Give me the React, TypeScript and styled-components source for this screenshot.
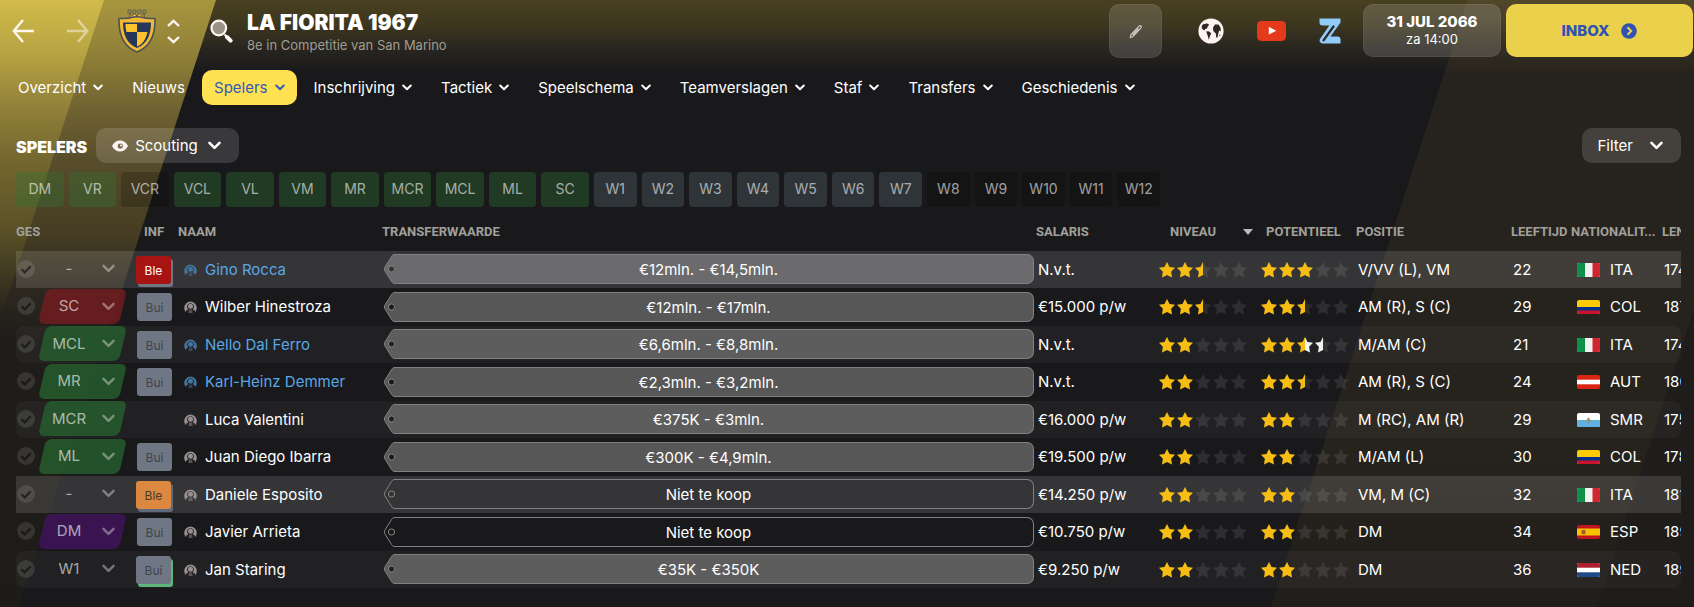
import React from "react";
import styled, { createGlobalStyle, css } from "styled-components";

const GlobalStyle = createGlobalStyle`
  *, *::before, *::after { box-sizing: border-box; }
  body {
    margin: 0;
    background: #19191b;
    color: #fff;
    font-family: Inter, "Liberation Sans", sans-serif;
    font-size: 15px;
    line-height: 20px;
  }
  button, select { font: inherit; color: inherit; }
  a { color: inherit; text-decoration: none; }
`;

const Page = styled.div`
  position: relative;
  min-height: 100vh;
  overflow: hidden;
  isolation: isolate;
  background: linear-gradient(#484020 0, #3d371f 24px, #2a2720 46px, #19191b 72px);
`;

const Beam = styled.div`
  position: absolute;
  inset: 0;
  z-index: -1;
`;

const WideBeam = styled(Beam)`
  clip-path: polygon(0 0, 216px 0, 0 665px);
  background: linear-gradient(
    #a8963e 0, #928238 50px, #6f6231 110px, #584d2b 160px,
    #453c23 235px, #2c2820 290px, #1f1d1a 340px, #1e1c19 600px
  );
`;

const BrightBeam = styled(Beam)`
  clip-path: polygon(0 0, 104px 0, 0 320px);
  background: linear-gradient(
    #d2bb4a 0, #b9a543 50px, #8f7f39 110px, #74672f 160px,
    #584f26 235px, #39331f 285px, #211f1a 320px
  );
`;

const RightBeam = styled(Beam)`
  clip-path: polygon(
    calc(100% - 226px) 0, 100% 0, 100% 310px,
    calc(100% - 225px) 1000px, calc(100% - 551px) 1000px
  );
  background: linear-gradient(#51472a 0, #463e27 24px, #352f22 46px, #26221d 76px, #26231d 450px, #211e1b 607px);
`;

const RightEdge = styled(Beam)`
  clip-path: polygon(100% 310px, 100% 100%, calc(100% - 97px) 607px, calc(100% - 97px) 100%);
  background: #1e1d1b;
`;

/* ---------- top bar ---------- */

const TopBar = styled.header`
  display: flex;
  align-items: flex-start;
  justify-content: space-between;
  height: 62px;
  padding: 4px 1px 0 12px;
`;

const TopGroup = styled.div`
  display: flex;
  align-items: center;
  height: 54px;
`;

const IconButton = styled.button<{ $faded?: boolean }>`
  display: grid;
  place-items: center;
  padding: 0;
  border: 0;
  background: none;
  cursor: pointer;
  opacity: ${(p) => (p.$faded ? 0.5 : 1)};
  svg { display: block; }
`;

const History = styled.div`
  display: flex;
  gap: 33px;
  margin-right: 29px;
`;

const Stepper = styled.div`
  display: grid;
  gap: 9px;
  margin: 0 30px 0 11px;
`;

const ClubTitle = styled.div`
  margin-left: 14px;
  padding-top: 4px;
`;

const ClubName = styled.h1`
  margin: 0;
  font-size: 21px;
  line-height: 24px;
  font-weight: 900;
`;

const ClubStanding = styled.p`
  margin: 0;
  font-size: 13px;
  line-height: 20px;
  color: #a09c92;
`;

const EditButton = styled(IconButton)`
  width: 53px;
  height: 54px;
  margin-right: 36px;
  border-radius: 10px;
  border: 1px solid rgba(255, 255, 255, 0.06);
  background: rgba(255, 255, 255, 0.14);
`;

const Shortcuts = styled.div`
  display: flex;
  align-items: center;
  gap: 33px;
  margin-right: 22px;
`;

const DateButton = styled.button`
  display: flex;
  flex-direction: column;
  align-items: center;
  justify-content: center;
  align-self: flex-start;
  width: 138px;
  height: 53px;
  padding: 0;
  border: 1px solid rgba(255, 255, 255, 0.05);
  border-radius: 10px;
  background: rgba(255, 255, 255, 0.15);
  cursor: pointer;
`;

const DateDay = styled.span`
  font-size: 15px;
  line-height: 17px;
  font-weight: 800;
`;

const DateTime = styled.span`
  font-size: 13px;
  line-height: 18px;
`;

const InboxButton = styled.button`
  display: flex;
  align-items: center;
  justify-content: center;
  align-self: flex-start;
  gap: 12px;
  width: 187px;
  height: 53px;
  margin-left: 5px;
  padding: 0;
  border: 0;
  border-radius: 10px;
  background: #ebd04c;
  color: #3052b4;
  font-weight: 800;
  cursor: pointer;
`;

/* ---------- navigation ---------- */

const Nav = styled.nav`
  display: flex;
  gap: 5px;
  margin-top: 8px;
  padding-left: 6px;
`;

const NavLink = styled.a<{ $active?: boolean }>`
  display: flex;
  align-items: center;
  gap: 7px;
  height: 35px;
  padding: 0 12px;
  border-radius: 10px;
  white-space: nowrap;
  ${(p) =>
    p.$active &&
    css`
      background: #ffe152;
      color: #3459b8;
    `}
`;

/* ---------- squad toolbar ---------- */

const Main = styled.main`
  padding: 0 13px 19px 16px;
`;

const Toolbar = styled.div`
  display: flex;
  align-items: center;
  justify-content: space-between;
  margin-top: 23px;
`;

const ToolbarStart = styled.div`
  display: flex;
  align-items: center;
  gap: 9px;
`;

const SectionTitle = styled.h2`
  margin: 0;
  padding-top: 3px;
  font-size: 16px;
  line-height: 20px;
  font-weight: 900;
`;

const ToolButton = styled.button`
  display: flex;
  align-items: center;
  gap: 7px;
  height: 35px;
  padding: 0 18px 0 16px;
  border: 0;
  border-radius: 10px;
  background: rgba(255, 245, 250, 0.14);
  cursor: pointer;
`;

const ToolLabel = styled.span<{ $gap: number }>`
  margin-right: ${(p) => p.$gap}px;
`;

const Chips = styled.div`
  display: grid;
  grid-template-columns: repeat(11, minmax(0, 48fr)) repeat(12, minmax(0, 43fr));
  gap: 5px;
  max-width: 1144px;
  margin-top: 9px;
`;

type ChipTone = "green" | "slate" | "empty";

const chipColors: Record<ChipTone, string> = {
  green: "rgba(50, 118, 52, 0.37)",
  slate: "rgba(78, 92, 100, 0.4)",
  empty: "rgba(0, 0, 0, 0.2)",
};

const Chip = styled.button<{ $tone: ChipTone }>`
  height: 35px;
  padding: 0 0 2px;
  border: 0;
  border-radius: 4px;
  background: ${(p) => chipColors[p.$tone]};
  color: rgba(255, 255, 255, 0.6);
  font-size: 14px;
  cursor: pointer;
`;

/* ---------- player table ---------- */

const Table = styled.table`
  width: 100%;
  table-layout: fixed;
  border-collapse: separate;
  border-spacing: 0;
`;

const Col = styled.col<{ $w?: number }>`
  width: ${(p) => (p.$w ? `${p.$w}px` : "auto")};
`;

const Th = styled.th<{ $pad?: number }>`
  height: 44px;
  padding: 6px 0 0 ${(p) => p.$pad ?? 0}px;
  overflow: hidden;
  text-align: left;
  white-space: nowrap;
  font-family: Roboto, "Liberation Sans", sans-serif;
  font-size: 13px;
  font-weight: 700;
  color: #a1a09b;
`;

const SortHead = styled.span`
  display: flex;
  align-items: center;
  justify-content: space-between;
  padding-right: 8px;
`;

const Td = styled.td<{ $pad?: number }>`
  padding: 0 0 0 ${(p) => p.$pad ?? 0}px;
  overflow: hidden;
  white-space: nowrap;
`;

const Row = styled.tr<{ $tone: "high" | "stripe" | "plain" }>`
  height: ${(p) => (p.$tone === "plain" ? 38 : 37)}px;
  td {
    background: ${(p) =>
      p.$tone === "high"
        ? "rgba(255, 255, 255, 0.125)"
        : p.$tone === "stripe"
          ? "rgba(255, 255, 255, 0.035)"
          : "transparent"};
  }
  ${(p) =>
    p.$tone === "stripe" &&
    css`
      td:first-child { border-radius: 8px 0 0 8px; }
      td:last-child { border-radius: 0 8px 8px 0; }
    `}
`;

const Selection = styled.div`
  display: flex;
  align-items: center;
  gap: 3px;
  height: 35px;
  margin-bottom: 2px;
  padding-left: 1px;
`;

const CheckLabel = styled.label`
  position: relative;
  display: block;
  width: 18px;
  height: 18px;
  svg { display: block; }
`;

const CheckInput = styled.input`
  position: absolute;
  inset: 0;
  width: 18px;
  height: 18px;
  margin: 0;
  opacity: 0;
`;

const Pill = styled.div<{ $color: string }>`
  position: relative;
  width: 89px;
  height: 35px;
  color: rgba(255, 255, 255, 0.38);
  &::before {
    content: "";
    position: absolute;
    inset: 0 4px;
    border-radius: 6px;
    background: ${(p) => p.$color};
    transform: skewX(-13deg);
  }
  svg {
    position: absolute;
    right: 12px;
    top: 13px;
    pointer-events: none;
  }
`;

const PillSelect = styled.select`
  position: relative;
  appearance: none;
  width: 89px;
  height: 35px;
  padding: 0 27px 0 0;
  border: 0;
  background: none;
  color: rgba(255, 255, 255, 0.62);
  text-align: center;
  text-align-last: center;
  option { color: #000; }
`;

const Badge = styled.span<{ $bg: string; $fg: string; $under?: string }>`
  display: block;
  width: 35px;
  height: 28px;
  margin-left: ${(p) => (p.$under ? 2 : 3)}px;
  border-radius: 3px;
  background: ${(p) => p.$bg};
  color: ${(p) => p.$fg};
  box-shadow: ${(p) => (p.$under ? `2px 3px 0 ${p.$under}` : "none")};
  font-size: 12px;
  line-height: 29px;
  text-align: center;
`;

const Player = styled.a<{ $scouted?: boolean }>`
  display: flex;
  align-items: center;
  gap: 8px;
  padding-left: 6px;
  color: ${(p) => (p.$scouted ? "#5aa7e6" : "#fff")};
  svg { color: ${(p) => (p.$scouted ? "#44749e" : "#989090")}; }
`;

const Tag = styled.div`
  display: flex;
  height: 30px;
  margin: 0 2px 1px;
  svg { flex: none; display: block; }
`;

const TagBody = styled.div<{ $filled: boolean }>`
  flex: 1;
  padding-right: 11px;
  border: 1px solid #818181;
  border-left: 0;
  border-radius: 0 7px 7px 0;
  background: ${(p) => (p.$filled ? "rgba(255, 255, 255, 0.27)" : "transparent")};
  line-height: 29px;
  text-align: center;
`;

const Stars = styled.span`
  display: flex;
  gap: 2px;
`;

const Nation = styled.span`
  display: flex;
  align-items: center;
  gap: 10px;
`;

/* ---------- drawings ---------- */

const Chevron = ({ w = 10, sw = 2 }: { w?: number; sw?: number }) => (
  <svg width={w} height={w === 10 ? 7 : 9} viewBox={w === 10 ? "0 0 10 7" : "0 0 13 9"} fill="none" stroke="currentColor" strokeWidth={sw} strokeLinecap="round" strokeLinejoin="round" aria-hidden="true">
    <path d={w === 10 ? "M1.2 1.5 5 5.2 8.8 1.5" : "M1.5 1.8 6.5 6.8 11.5 1.8"} />
  </svg>
);

const Arrow = ({ back }: { back?: boolean }) => (
  <svg width="22" height="24" viewBox="0 0 22 24" fill="none" stroke="#fff8f0" strokeWidth="2.4" aria-hidden="true">
    <path d={back ? "M11 1 1.8 12 11 23M2 12h20" : "M11 1 20.2 12 11 23M20 12H0"} />
  </svg>
);

const Step = ({ up }: { up?: boolean }) => (
  <svg width="13" height="8" viewBox="0 0 13 8" fill="none" stroke="#fff8f4" strokeWidth="2.4" aria-hidden="true">
    <path d={up ? "M1 7 6.5 1.8 12 7" : "M1 1 6.5 6.2 12 1"} />
  </svg>
);

const Crest = () => (
  <svg width="38" height="44" viewBox="0 0 38 44" role="img" aria-label="La Fiorita">
    <g fill="none" stroke="#6c6a4a" strokeWidth="1.3">
      <circle cx="11.5" cy="2.6" r="1.7" />
      <circle cx="16.5" cy="2.6" r="1.7" />
      <circle cx="21.5" cy="2.6" r="1.7" />
      <circle cx="26.5" cy="2.6" r="1.7" />
    </g>
    <path d="M12 10V4.6l2.4 2.2 2.3-2.2L19 6.8l2.3-2.2 2.3 2.2L26 4.6V10z" fill="#f3bd36" stroke="#4d5157" strokeWidth="1" />
    <path d="M1 9.5C7 9.5 10 10 13 8.500 17 7.500 21 7.500 25 8.500 28 10 31 9.500 37 9.500 37.500 26 32 38 19 43 6 38 .5 26 1 9.500z" fill="#f0b935" stroke="#4d5157" strokeWidth="1.6" />
    <path d="M5 13.500H33C33 26 29 35 19 39 9 35 5 26 5 13.500z" fill="#27375a" />
    <path d="M7.500 15H19V23H8.500C7.800 20 7.500 18 7.500 15zM19 23H29.500C28 30 25 35 19 37.500z" fill="#fcc22e" />
  </svg>
);

const SearchIcon = () => (
  <svg width="23" height="24" viewBox="0 0 23 24" aria-hidden="true">
    <path d="m14.500 15.500 2 2" stroke="#fff6f2" strokeWidth="2" />
    <path d="m17 18 3.600 3.600" stroke="#fff6f2" strokeWidth="4" strokeLinecap="round" />
    <circle cx="8.800" cy="9" r="7.300" fill="#9c9187" stroke="#fff6f2" strokeWidth="2.200" />
  </svg>
);

const PencilIcon = () => (
  <svg width="14" height="15" viewBox="0 0 14 15" fill="none" stroke="#d8d2cc" strokeWidth="1.1" strokeLinejoin="round" aria-hidden="true">
    <path d="M1.300 13.600 1.900 10.600 10.300 1.900C11.400 1 13 2.500 12.200 3.700L3.900 12.700zM3.600 11 9.500 4.700" />
  </svg>
);

const GlobeIcon = () => (
  <svg width="26" height="26" viewBox="0 0 26 26" aria-hidden="true">
    <circle cx="13" cy="13" r="12.600" fill="#fff3f1" />
    <g fill="#2c2820">
      <path d="M3.500 8.500 5.500 5.800 7 6.300 8.500 5.300 11.300 6.800 9.800 8.300 9 10.500 7.300 11 6.300 12.600 4.300 11z" />
      <path d="M8.200 13.500 10.500 13.300 13.200 15.300 12 18 10.800 21.800 9.800 18z" />
      <path d="M15 9.500 17 6.500 20.500 6.500 22.500 9.500 22.800 13.500 21.200 12.600 20.300 15.500 19.500 19.500 18.300 19.800 17.800 15.500 15.300 13z" />
      <path d="m20.800 18.300 1.300-2 .3 1.500z" />
    </g>
  </svg>
);

const VideoIcon = () => (
  <svg width="29" height="20" viewBox="0 0 29 20" aria-hidden="true">
    <rect width="29" height="20" rx="4.500" fill="#e23a1b" />
    <path d="M11.800 5.800v7.800l7.500-3.900z" fill="#fff" />
  </svg>
);

const ZIcon = () => (
  <svg width="22" height="26" viewBox="0 0 22 26" aria-hidden="true">
    <path d="M.5.500H21.500V4.500L11.500 18.500H18.500A3 3 0 0 1 21.500 21.500V25.500H4C1 25.500-.3 22.800 1.300 20.500L10.300 7.500H3.500A3 3 0 0 1 .5 4.500z" fill="#90cbf9" />
    <path d="M14.500 8.500 4.500 22.300" stroke="#2c2820" strokeWidth="2.200" strokeLinecap="round" />
  </svg>
);

const InboxArrow = () => (
  <svg width="16" height="16" viewBox="0 0 16 16" aria-hidden="true">
    <circle cx="8" cy="8" r="7.800" fill="#3052b4" />
    <path d="m6.500 4.300 3.700 3.700-3.700 3.700" fill="none" stroke="#ebd04c" strokeWidth="2" />
  </svg>
);

const EyeIcon = () => (
  <svg width="16" height="12" viewBox="0 0 16 12" aria-hidden="true">
    <path fillRule="evenodd" fill="#fff4f2" d="M0 6C2 2.200 4.800.5 8 .5S14 2.200 16 6C14 9.800 11.200 11.500 8 11.500S2 9.800 0 6zM8.300 3.400A2.600 2.600 0 1 0 8.300 8.600 2.600 2.600 0 1 0 8.300 3.400z" />
    <circle cx="9" cy="5.400" r="1" fill="#fff4f2" />
  </svg>
);

const CheckMark = () => (
  <svg width="18" height="18" viewBox="0 0 18 18" aria-hidden="true">
    <circle cx="9" cy="9" r="9" fill="rgba(255,255,255,.11)" />
    <path d="m4.500 9.300 3.200 3.200 6-6.300" fill="none" stroke="rgba(0,0,0,.55)" strokeWidth="2.200" />
  </svg>
);

const PersonIcon = () => (
  <svg width="13" height="12" viewBox="0 0 13 12" aria-hidden="true">
    <path fill="currentColor" fillRule="evenodd" d="M1.900 11.200A6.300 6.300 0 1 1 11.100 11.200L10.700 9.600 8.600 8.300A3.400 3.400 0 1 0 4.400 8.300L2.300 9.600z" />
    <circle cx="6.500" cy="5.200" r="2.500" fill="currentColor" />
    <path fill="currentColor" d="M4.400 12 4.900 8.500h3.200l.5 3.500z" opacity=".5" />
  </svg>
);

const TagTip = ({ filled }: { filled: boolean }) => (
  <svg width="11" height="30" viewBox="0 0 11 30" aria-hidden="true">
    {filled && (
      <path fillRule="evenodd" fill="rgba(255,255,255,.27)" d="M11 .5C9.500.5 8.500 1 7.700 2.300L.8 13.300Q0 15 .8 16.700L7.700 27.700C8.500 29 9.500 29.500 11 29.500zM8 11.900A3.100 3.100 0 1 0 8 18.100 3.100 3.100 0 1 0 8 11.900z" />
    )}
    <path fill="none" stroke="#818181" d="M11 .5C9.500.5 8.500 1 7.700 2.300L.8 13.300Q0 15 .8 16.700L7.700 27.700C8.500 29 9.500 29.500 11 29.500" />
    <circle cx="7.500" cy="15" r="3.100" fill="none" stroke="#858585" />
  </svg>
);

const STAR = "M8 0 10.500 5 16 5.800 12.100 9.700 13 15.600 8 12.900 3 15.600 3.900 9.700 0 5.800 5.500 5z";
const HALF_LEFT = "M8 0V12.900L3 15.600 3.900 9.700 0 5.800 5.500 5z";
const HALF_RIGHT = "M8 0 10.500 5 16 5.800 12.100 9.700 13 15.600 8 12.900z";

const GOLD = "#f7bd13";

/* One letter per star: g gold, h half gold, m half gold and half white, w half white, e empty. */
const starHalves: Record<string, [string?, string?]> = {
  g: [GOLD, GOLD],
  h: [GOLD],
  m: [GOLD, "#f4f2f2"],
  w: ["#f4f2f2"],
  e: [],
};

const Rating = ({ value, label }: { value: string; label: string }) => (
  <Stars role="img" aria-label={label}>
    {value.split("").map((s, i) => {
      const [left, right] = starHalves[s];
      return (
        <svg key={i} width="16" height="16" viewBox="0 0 16 16">
          <path d={STAR} fill="rgba(255,255,255,.095)" />
          {left && left === right && <path d={STAR} fill={left} />}
          {left && left !== right && <path d={HALF_LEFT} fill={left} />}
          {right && left !== right && <path d={HALF_RIGHT} fill={right} />}
        </svg>
      );
    })}
  </Stars>
);

const FlagFrame = styled.svg`
  display: block;
  border-radius: 2px;
`;

const Flag = ({ code }: { code: string }) => (
  <FlagFrame width="23" height="14" viewBox="0 0 23 14" aria-hidden="true">
    {code === "ITA" && (
      <>
        <rect width="23" height="14" fill="#f1f1ee" />
        <rect width="8" height="14" fill="#0b9149" />
        <rect x="15.500" width="7.500" height="14" fill="#cf2630" />
      </>
    )}
    {code === "COL" && (
      <>
        <rect width="23" height="14" fill="#fdcb05" />
        <rect y="7" width="23" height="4" fill="#05318a" />
        <rect y="10.500" width="23" height="3.500" fill="#c8142f" />
      </>
    )}
    {code === "AUT" && (
      <>
        <rect width="23" height="14" fill="#d92512" />
        <rect y="4.700" width="23" height="4.600" fill="#fff" />
      </>
    )}
    {code === "SMR" && (
      <>
        <rect width="23" height="14" fill="#fff" />
        <rect y="7" width="23" height="7" fill="#5fb1e2" />
        <path d="M11.500 4 13 6.500 14.300 7.500 13 9.600H10L8.700 7.500 10 6.500z" fill="#8f9a78" />
      </>
    )}
    {code === "ESP" && (
      <>
        <rect width="23" height="14" fill="#c1141f" />
        <rect y="3.500" width="23" height="7" fill="#f6c300" />
        <rect x="4.500" y="5" width="4" height="4.200" rx="1" fill="#a8552b" />
      </>
    )}
    {code === "NED" && (
      <>
        <rect width="23" height="14" fill="#fff" />
        <rect width="23" height="4.700" fill="#ae1f2c" />
        <rect y="9.300" width="23" height="4.700" fill="#214a8b" />
      </>
    )}
  </FlagFrame>
);

/* ---------- data ---------- */

const navItems = [
  "Overzicht", "Nieuws", "Spelers", "Inschrijving", "Tactiek",
  "Speelschema", "Teamverslagen", "Staf", "Transfers", "Geschiedenis",
];

const slots: [string, ChipTone][] = [
  ["DM", "green"], ["VR", "green"], ["VCR", "empty"], ["VCL", "green"],
  ["VL", "green"], ["VM", "green"], ["MR", "green"], ["MCR", "green"],
  ["MCL", "green"], ["ML", "green"], ["SC", "green"],
  ["W1", "slate"], ["W2", "slate"], ["W3", "slate"], ["W4", "slate"],
  ["W5", "slate"], ["W6", "slate"], ["W7", "slate"],
  ["W8", "empty"], ["W9", "empty"], ["W10", "empty"], ["W11", "empty"], ["W12", "empty"],
];

const RED = "rgba(116, 28, 32, 0.82)";
const GREEN = "rgba(38, 92, 45, 0.85)";
const PURPLE = "rgba(62, 20, 86, 0.9)";
const NONE = "transparent";

const badges = {
  injured: { $bg: "#a81412", $fg: "#fff", $under: "#6f7785" },
  minor: { $bg: "#dc8840", $fg: "#4c3a28", $under: "#5f6b7d" },
  foreign: { $bg: "#6f7785", $fg: "#41444a" },
  foreignPlus: { $bg: "#6f7785", $fg: "#41444a", $under: "#5db57c" },
};

type PlayerRow = {
  slot: string;
  color: string;
  info?: { text: string; style: keyof typeof badges };
  name: string;
  scouted?: boolean;
  value: string;
  wage: string;
  level: string;
  potential: string;
  position: string;
  age: number;
  nation: string;
  height: string;
};

const bui = { text: "Bui", style: "foreign" as const };

const players: PlayerRow[] = [
  { slot: "-", color: NONE, info: { text: "Ble", style: "injured" }, name: "Gino Rocca", scouted: true, value: "€12mln. - €14,5mln.", wage: "N.v.t.", level: "gghee", potential: "gggee", position: "V/VV (L), VM", age: 22, nation: "ITA", height: "174 cm" },
  { slot: "SC", color: RED, info: bui, name: "Wilber Hinestroza", value: "€12mln. - €17mln.", wage: "€15.000 p/w", level: "gghee", potential: "gghee", position: "AM (R), S (C)", age: 29, nation: "COL", height: "187 cm" },
  { slot: "MCL", color: GREEN, info: bui, name: "Nello Dal Ferro", scouted: true, value: "€6,6mln. - €8,8mln.", wage: "N.v.t.", level: "ggeee", potential: "ggmwe", position: "M/AM (C)", age: 21, nation: "ITA", height: "174 cm" },
  { slot: "MR", color: GREEN, info: bui, name: "Karl-Heinz Demmer", scouted: true, value: "€2,3mln. - €3,2mln.", wage: "N.v.t.", level: "ggeee", potential: "gghee", position: "AM (R), S (C)", age: 24, nation: "AUT", height: "180 cm" },
  { slot: "MCR", color: GREEN, name: "Luca Valentini", value: "€375K - €3mln.", wage: "€16.000 p/w", level: "ggeee", potential: "ggeee", position: "M (RC), AM (R)", age: 29, nation: "SMR", height: "175 cm" },
  { slot: "ML", color: GREEN, info: bui, name: "Juan Diego Ibarra", value: "€300K - €4,9mln.", wage: "€19.500 p/w", level: "ggeee", potential: "ggeee", position: "M/AM (L)", age: 30, nation: "COL", height: "178 cm" },
  { slot: "-", color: NONE, info: { text: "Ble", style: "minor" }, name: "Daniele Esposito", value: "Niet te koop", wage: "€14.250 p/w", level: "ggeee", potential: "ggeee", position: "VM, M (C)", age: 32, nation: "ITA", height: "181 cm" },
  { slot: "DM", color: PURPLE, info: bui, name: "Javier Arrieta", value: "Niet te koop", wage: "€10.750 p/w", level: "ggeee", potential: "ggeee", position: "DM", age: 34, nation: "ESP", height: "189 cm" },
  { slot: "W1", color: NONE, info: { text: "Bui", style: "foreignPlus" }, name: "Jan Staring", value: "€35K - €350K", wage: "€9.250 p/w", level: "ggeee", potential: "ggeee", position: "DM", age: 36, nation: "NED", height: "189 cm" },
];

const columns = [118, 44, 204, 0, 122, 103, 95, 155, 60, 91, 19];

export default function App() {
  return (
    <>
      <GlobalStyle />
      <Page>
        <WideBeam />
        <BrightBeam />
        <RightBeam />
        <RightEdge />

        <TopBar>
          <TopGroup>
            <History>
              <IconButton aria-label="Terug"><Arrow back /></IconButton>
              <IconButton aria-label="Vooruit" $faded><Arrow /></IconButton>
            </History>
            <Crest />
            <Stepper>
              <IconButton aria-label="Vorige club"><Step up /></IconButton>
              <IconButton aria-label="Volgende club"><Step /></IconButton>
            </Stepper>
            <IconButton aria-label="Zoeken"><SearchIcon /></IconButton>
            <ClubTitle>
              <ClubName>LA FIORITA 1967</ClubName>
              <ClubStanding>8e in Competitie van San Marino</ClubStanding>
            </ClubTitle>
          </TopGroup>
          <TopGroup>
            <EditButton aria-label="Bewerken"><PencilIcon /></EditButton>
            <Shortcuts>
              <IconButton aria-label="Wereld"><GlobeIcon /></IconButton>
              <IconButton aria-label="Video"><VideoIcon /></IconButton>
              <IconButton aria-label="Z"><ZIcon /></IconButton>
            </Shortcuts>
            <DateButton>
              <DateDay>31 JUL 2066</DateDay>
              <DateTime>za 14:00</DateTime>
            </DateButton>
            <InboxButton>
              INBOX
              <InboxArrow />
            </InboxButton>
          </TopGroup>
        </TopBar>

        <Nav>
          {navItems.map((item) => (
            <NavLink key={item} href={`#${item.toLowerCase()}`} $active={item === "Spelers"}>
              {item}
              {item !== "Nieuws" && <Chevron />}
            </NavLink>
          ))}
        </Nav>

        <Main>
          <Toolbar>
            <ToolbarStart>
              <SectionTitle>SPELERS</SectionTitle>
              <ToolButton>
                <EyeIcon />
                <ToolLabel $gap={3}>Scouting</ToolLabel>
                <Chevron w={13} sw={2.6} />
              </ToolButton>
            </ToolbarStart>
            <ToolButton>
              <ToolLabel $gap={10}>Filter</ToolLabel>
              <Chevron w={13} sw={2.6} />
            </ToolButton>
          </Toolbar>

          <Chips>
            {slots.map(([name, tone]) => (
              <Chip key={name} $tone={tone}>{name}</Chip>
            ))}
          </Chips>

          <Table>
            <colgroup>
              {columns.map((w, i) => <Col key={i} $w={w} />)}
            </colgroup>
            <thead>
              <tr>
                <Th>GES</Th>
                <Th $pad={10}>INF</Th>
                <Th>NAAM</Th>
                <Th>TRANSFERWAARDE</Th>
                <Th>SALARIS</Th>
                <Th $pad={12}>
                  <SortHead>
                    NIVEAU
                    <svg width="10" height="6" viewBox="0 0 10 6" aria-hidden="true">
                      <path d="M0 0h10L5 6z" fill="#b9bcc4" />
                    </svg>
                  </SortHead>
                </Th>
                <Th $pad={5}>POTENTIEEL</Th>
                <Th>POSITIE</Th>
                <Th>LEEFTIJD</Th>
                <Th>NATIONALIT...</Th>
                <Th>LENGTE</Th>
              </tr>
            </thead>
            <tbody>
              {players.map((p, i) => (
                <Row key={p.name} $tone={i % 6 === 0 ? "high" : i % 2 === 0 ? "stripe" : "plain"}>
                  <Td>
                    <Selection>
                      <CheckLabel>
                        <CheckInput type="checkbox" aria-label={`Selecteer ${p.name}`} />
                        <CheckMark />
                      </CheckLabel>
                      <Pill $color={p.color}>
                        <PillSelect aria-label={`Positie van ${p.name}`} defaultValue={p.slot}>
                          <option>{p.slot}</option>
                        </PillSelect>
                        <Chevron w={13} sw={2.4} />
                      </Pill>
                    </Selection>
                  </Td>
                  <Td>{p.info && <Badge {...badges[p.info.style]}>{p.info.text}</Badge>}</Td>
                  <Td>
                    <Player href="#speler" $scouted={p.scouted}>
                      <PersonIcon />
                      {p.name}
                    </Player>
                  </Td>
                  <Td>
                    <Tag>
                      <TagTip filled={p.value !== "Niet te koop"} />
                      <TagBody $filled={p.value !== "Niet te koop"}>{p.value}</TagBody>
                    </Tag>
                  </Td>
                  <Td $pad={2}>{p.wage}</Td>
                  <Td $pad={1}><Rating value={p.level} label="Niveau" /></Td>
                  <Td><Rating value={p.potential} label="Potentieel" /></Td>
                  <Td $pad={2}>{p.position}</Td>
                  <Td $pad={2}>{p.age}</Td>
                  <Td $pad={6}>
                    <Nation>
                      <Flag code={p.nation} />
                      {p.nation}
                    </Nation>
                  </Td>
                  <Td $pad={2}>{p.height}</Td>
                </Row>
              ))}
            </tbody>
          </Table>
        </Main>
      </Page>
    </>
  );
}
